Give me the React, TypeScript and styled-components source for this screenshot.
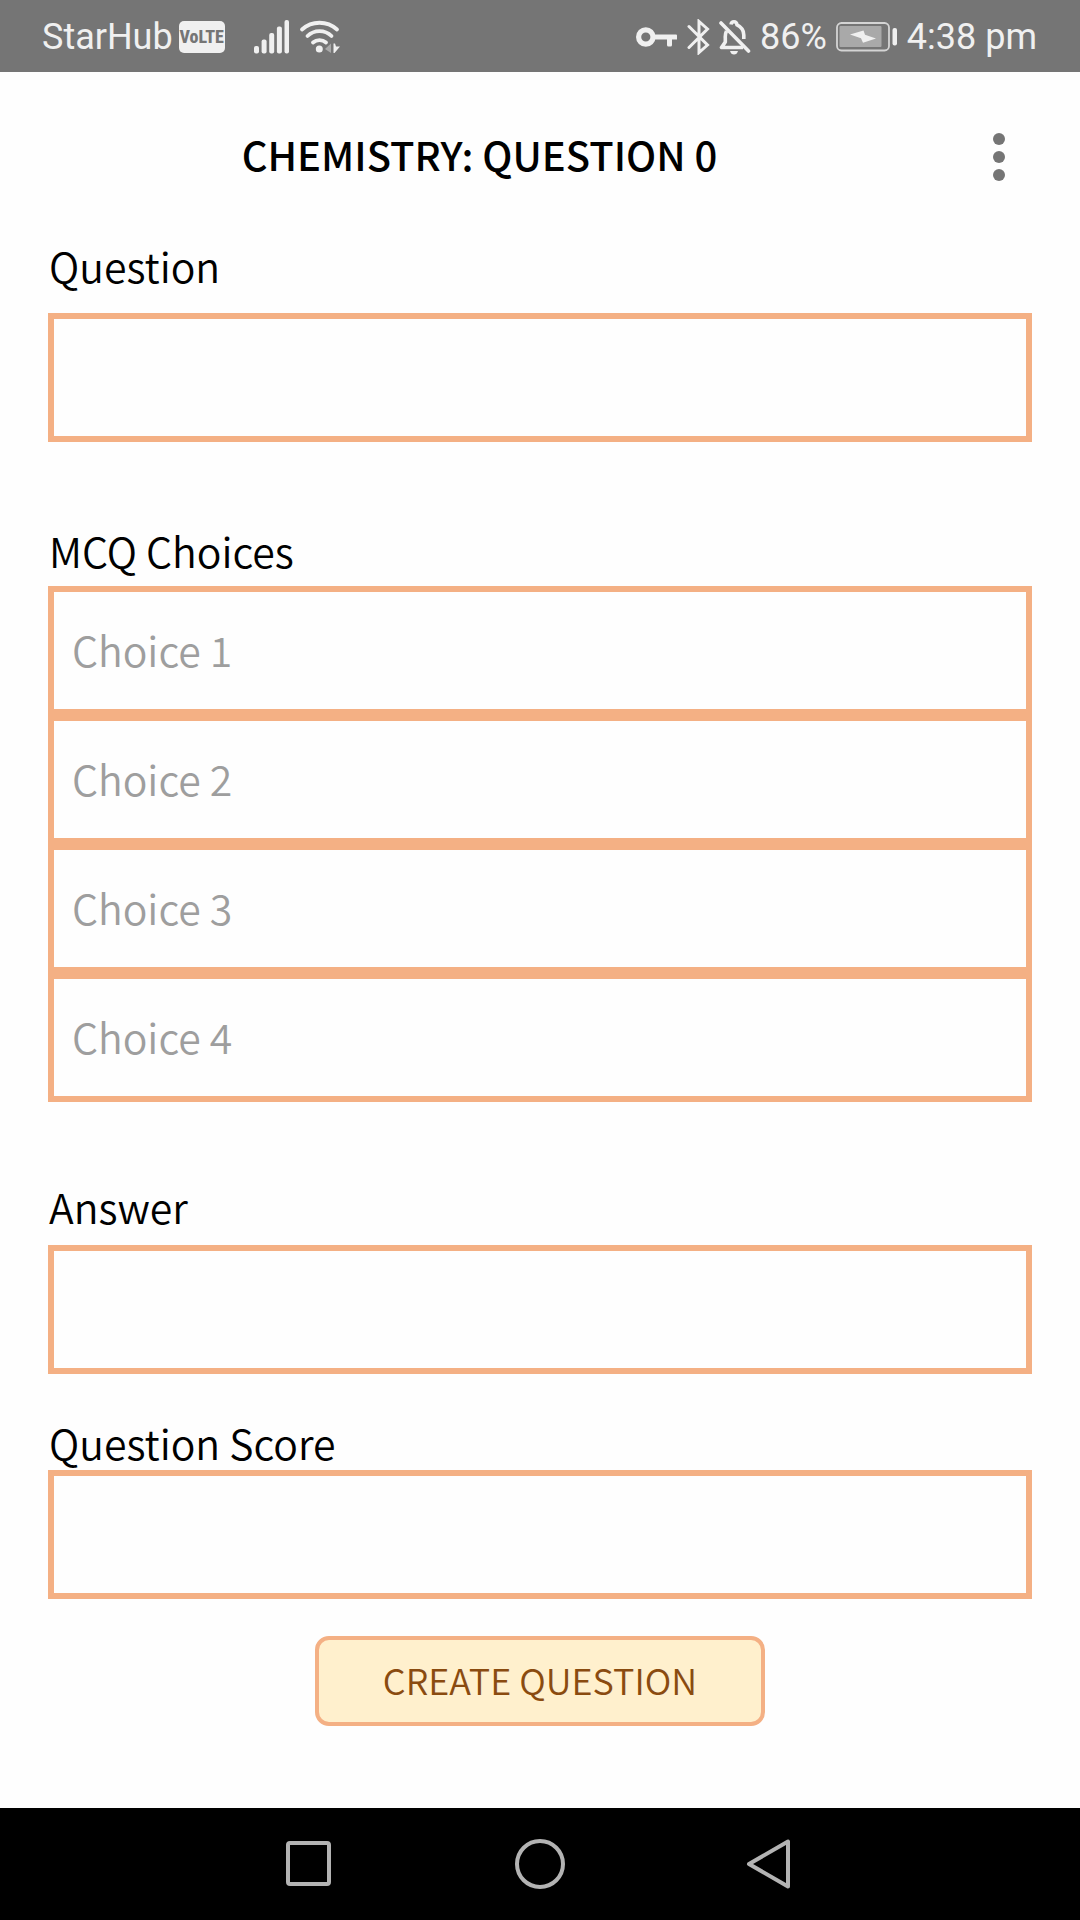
import React from 'react';
import styled, { createGlobalStyle } from 'styled-components';

const BODY_FONT = '"Noto Sans CJK SC", "Open Sans", sans-serif';
const SYSTEM_FONT = 'Roboto, "Liberation Sans", sans-serif';
const ACCENT = '#f4b084';
const STATUS_INK = '#f0f0f0';

const GlobalStyle = createGlobalStyle`
  *, *::before, *::after { box-sizing: border-box; }
  body { margin: 0; background: #fefefe; }
`;

const Page = styled.div`
  display: flex;
  flex-direction: column;
  min-height: 100vh;
  color: #000;
  font-family: ${BODY_FONT};
`;

const StatusBar = styled.div`
  display: flex;
  align-items: center;
  justify-content: space-between;
  height: 72px;
  padding: 2px 43px 0 42px;
  background: #757575;
  color: ${STATUS_INK};
  font-family: ${SYSTEM_FONT};
  font-size: 36px;
  line-height: 44px;
  white-space: nowrap;
`;

const StatusGroup = styled.div<{ $gap: number }>`
  display: flex;
  align-items: center;
  gap: ${(p) => p.$gap}px;
`;

const Carrier = styled.div`
  display: flex;
  align-items: center;
  gap: 6px;
  margin-right: 20px;
`;

const NetworkBadge = styled.span`
  width: 46px;
  border-radius: 5px;
  background: ${STATUS_INK};
  color: #757575;
  font-family: "Roboto Condensed", Roboto, sans-serif;
  font-size: 18px;
  font-weight: 800;
  line-height: 32px;
  text-align: center;
`;

const Icon = styled.svg`
  display: block;
  flex: none;
`;

const Header = styled.header`
  display: flex;
  align-items: center;
  height: 169px;
  padding-right: 41px;
`;

const Title = styled.h1`
  flex: 1;
  margin: 0;
  padding-bottom: 6px;
  font-size: 40px;
  font-weight: 500;
  line-height: 48px;
  text-align: center;
`;

const MenuButton = styled.button`
  display: grid;
  place-items: center;
  width: 80px;
  height: 80px;
  padding: 0;
  border: 0;
  background: none;
`;

const Form = styled.form`
  display: flex;
  flex: 1;
  flex-direction: column;
  padding: 0 48px 80px;
`;

const Group = styled.div<{ $gap: number; $after: number }>`
  display: flex;
  flex-direction: column;
  gap: ${(p) => p.$gap}px;
  margin-bottom: ${(p) => p.$after}px;
`;

const ChoiceGroup = styled(Group).attrs({ role: 'group' })``;

const Label = styled.label`
  padding-left: 1px;
  font-size: 41px;
  font-weight: 350;
  line-height: 48px;
`;

const Choices = styled.div`
  display: flex;
  flex-direction: column;
`;

const TextField = styled.input`
  width: 100%;
  height: 129px;
  padding: 0 18px 4px;
  border: 6px solid ${ACCENT};
  border-radius: 0;
  outline: 0;
  background: #fefefe;
  color: #000;
  font-family: ${BODY_FONT};
  font-size: 41px;
  font-weight: 350;

  &::placeholder {
    color: #9e9e9e;
    opacity: 1;
  }
`;

const SubmitButton = styled.button`
  align-self: center;
  height: 90px;
  padding: 0 64px 4px;
  border: 4px solid ${ACCENT};
  border-radius: 14px;
  background: #fff0cd;
  color: #8a4b10;
  font-family: ${BODY_FONT};
  font-size: 36px;
  font-weight: 350;
  line-height: 48px;
`;

const NavBar = styled.nav`
  display: flex;
  align-items: center;
  justify-content: center;
  gap: 180px;
  height: 112px;
  background: #000;
`;

const NavButton = styled.button`
  width: 50px;
  height: 50px;
  padding: 0;
  border: 0;
  background: none;
`;

const SignalIcon = () => (
  <Icon width="36" height="34" viewBox="0 0 36 34" fill={STATUS_INK}>
    <rect x="0" y="26" width="5" height="7.5" rx="2" />
    <rect x="7.6" y="19.5" width="5" height="14" rx="2" />
    <rect x="15.2" y="13" width="5" height="20.5" rx="2" />
    <rect x="22.9" y="6.5" width="5" height="27" rx="2" />
    <rect x="30.5" y="0" width="4.5" height="33.5" rx="2" />
  </Icon>
);

const WifiIcon = () => (
  <Icon width="42" height="34" viewBox="0 0 42 34" fill="none" stroke={STATUS_INK} strokeWidth="3.8" strokeLinecap="round">
    <path d="M3 9.5A26 26 0 0 1 38 9.5" />
    <path d="M8.5 16A17 17 0 0 1 32.5 16" />
    <path d="M14 22.5A10 10 0 0 1 27 22.5" />
    <circle cx="20.3" cy="29" r="3.5" fill={STATUS_INK} stroke="none" />
    <path d="M26 29L32 23.5V33Z" fill="#a9a9a9" stroke="none" />
    <path d="M34.5 23.5H36L37 26.5H41L35.5 33H34.5Z" fill={STATUS_INK} stroke="none" />
  </Icon>
);

const KeyIcon = () => (
  <Icon width="42" height="22" viewBox="0 0 42 22" fill={STATUS_INK}>
    <circle cx="9.8" cy="11" r="7.2" fill="none" stroke={STATUS_INK} strokeWidth="5.2" />
    <path d="M18 8.5H40Q41 8.5 41 9.5V13.5H36V19Q36 20.5 34.5 20.5H32.5Q31 20.5 31 19V13.5H18Z" />
  </Icon>
);

const BluetoothIcon = () => (
  <Icon width="23" height="36" viewBox="0 0 23 36" fill="none" stroke={STATUS_INK} strokeWidth="3" strokeLinecap="round">
    <path d="M2 7.5L20.500 26L12 33.500V2.500L20.500 10L2 28.500" />
  </Icon>
);

const BellOffIcon = () => (
  <Icon width="32" height="35" viewBox="0 0 32 35" fill="none" stroke={STATUS_INK} strokeWidth="3.6">
    <path d="M2 3L29.5 31" strokeLinecap="round" />
    <path d="M7.500 11Q6 14 6.300 18V22L2.500 27.500H24" strokeLinejoin="round" />
    <path d="M12 4.500Q12.500 1.800 15 1.800T18 4.800Q24.800 8 24.800 15V19" />
    <path d="M11 31H19Q18 34.500 15 34.500T11 31Z" fill={STATUS_INK} stroke="none" />
  </Icon>
);

const BatteryIcon = () => (
  <Icon width="62" height="30" viewBox="0 0 62 30">
    <rect x="1" y="1" width="52" height="27.5" rx="4.5" fill="none" stroke="#d4d4d4" strokeWidth="1.8" />
    <rect x="3.5" y="4" width="42" height="21" rx="1" fill="#a9a9a9" />
    <path d="M14 12.500L27.500 8.500L29 12.700L40 16.500L27 20.700L25 16.300Z" fill={STATUS_INK} />
    <rect x="56.500" y="6" width="4.500" height="17.500" rx="2" fill={STATUS_INK} />
  </Icon>
);

const MoreIcon = () => (
  <Icon width="12" height="48" viewBox="0 0 12 48" fill="#757575">
    <circle cx="6" cy="6" r="6" />
    <circle cx="6" cy="24" r="6" />
    <circle cx="6" cy="42" r="6" />
  </Icon>
);

const NavIcon = ({ children }: { children: React.ReactNode }) => (
  <Icon width="50" height="50" viewBox="0 0 50 50" fill="none" stroke="#b3b3b3" strokeWidth="4" strokeLinejoin="round">
    {children}
  </Icon>
);

const choices = ['Choice 1', 'Choice 2', 'Choice 3', 'Choice 4'];

export default function App() {
  return (
    <>
      <GlobalStyle />
      <Page>
        <StatusBar>
          <StatusGroup $gap={9}>
            <Carrier>
              <span>StarHub</span>
              <NetworkBadge>VoLTE</NetworkBadge>
            </Carrier>
            <SignalIcon />
            <WifiIcon />
          </StatusGroup>
          <StatusGroup $gap={9}>
            <KeyIcon />
            <BluetoothIcon />
            <BellOffIcon />
            <span>86%</span>
            <BatteryIcon />
            <span>4:38 pm</span>
          </StatusGroup>
        </StatusBar>

        <Header>
          <Title>CHEMISTRY: QUESTION 0</Title>
          <MenuButton type="button" aria-label="More options">
            <MoreIcon />
          </MenuButton>
        </Header>

        <Form onSubmit={(e) => e.preventDefault()}>
          <Group $gap={24} $after={84}>
            <Label htmlFor="question">Question</Label>
            <TextField id="question" type="text" />
          </Group>

          <ChoiceGroup $gap={12} $after={80} aria-labelledby="choices-label">
            <Label id="choices-label" htmlFor="choice-1">MCQ Choices</Label>
            <Choices>
              {choices.map((choice, i) => (
                <TextField key={choice} id={`choice-${i + 1}`} type="text" placeholder={choice} aria-label={choice} />
              ))}
            </Choices>
          </ChoiceGroup>

          <Group $gap={15} $after={44}>
            <Label htmlFor="answer">Answer</Label>
            <TextField id="answer" type="text" />
          </Group>

          <Group $gap={4} $after={37}>
            <Label htmlFor="score">Question Score</Label>
            <TextField id="score" type="text" />
          </Group>

          <SubmitButton type="submit">CREATE QUESTION</SubmitButton>
        </Form>

        <NavBar aria-label="System navigation">
          <NavButton type="button" aria-label="Recent apps">
            <NavIcon><rect x="3" y="4" width="41" height="41" rx="2" /></NavIcon>
          </NavButton>
          <NavButton type="button" aria-label="Home">
            <NavIcon><circle cx="25" cy="25" r="23" /></NavIcon>
          </NavButton>
          <NavButton type="button" aria-label="Back">
            <NavIcon><path d="M4 25L43 2.5V47.5Z" /></NavIcon>
          </NavButton>
        </NavBar>
      </Page>
    </>
  );
}
